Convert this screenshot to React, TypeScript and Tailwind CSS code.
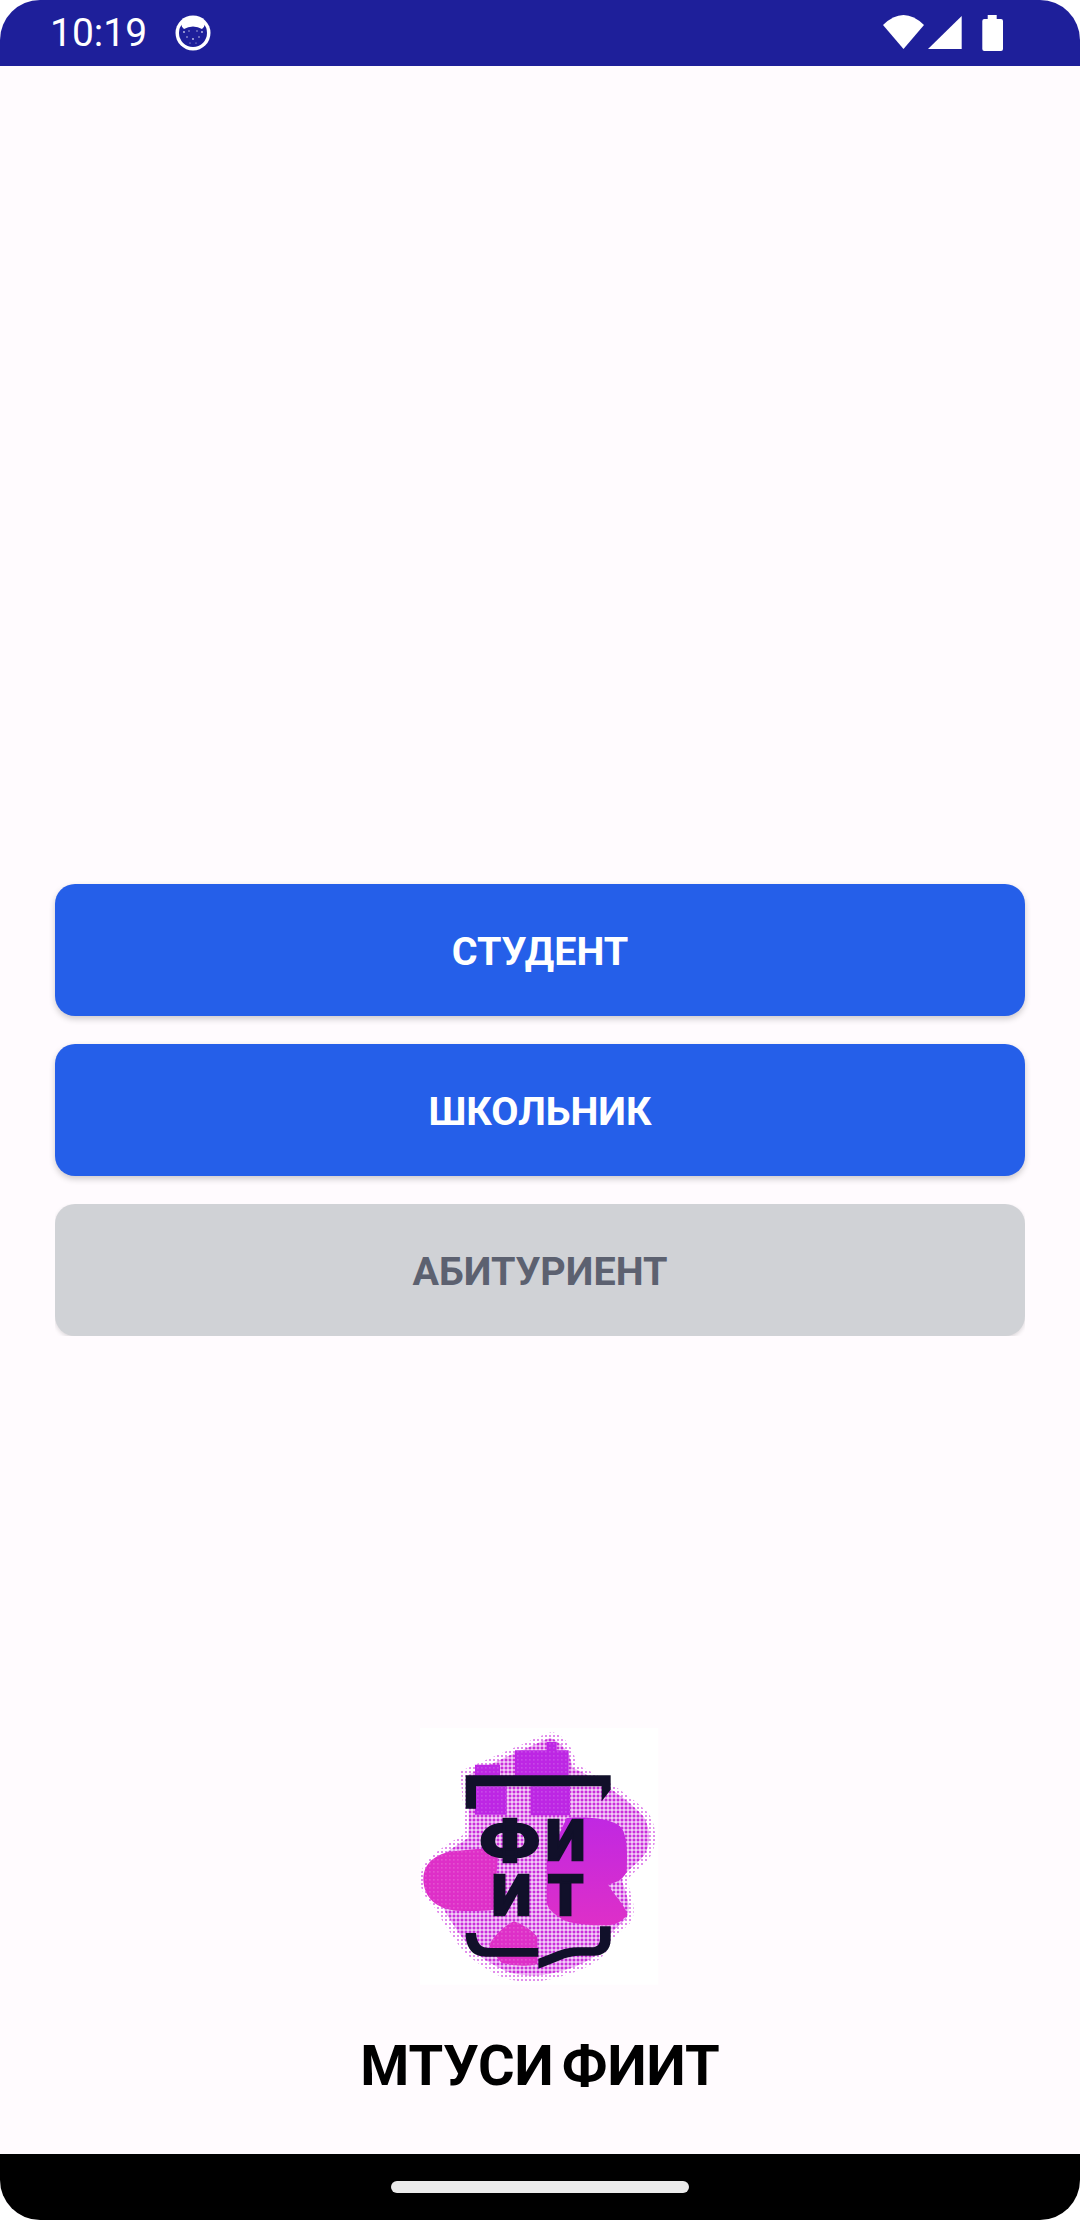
import React from "react";

function CatIcon() {
  return (
    <svg width="36" height="36" viewBox="0 0 36 36" className="block">
      <circle cx="18" cy="18" r="17.5" fill="#ffffff" />
      <circle cx="18" cy="18" r="14" fill="#1e1f9a" />
      <path d="M6 9 Q7 13 9 14 Q13 11.5 18 11.5 Q23 11.5 27 14 Q29 13 30 9 Q25 3 18 3 Q11 3 6 9Z" fill="#ffffff" />
      <g fill="#ffffff" opacity="0.75">
        <circle cx="9" cy="17" r="0.9" />
        <circle cx="14" cy="16" r="0.7" />
        <circle cx="22" cy="16" r="0.7" />
        <circle cx="27" cy="17" r="0.9" />
        <circle cx="12" cy="22" r="0.8" />
        <circle cx="18" cy="24" r="0.9" />
        <circle cx="24" cy="22" r="0.8" />
        <circle cx="15" cy="28" r="0.6" />
        <circle cx="21" cy="28" r="0.6" />
      </g>
    </svg>
  );
}

function StatusIcons() {
  return (
    <svg width="120" height="40" viewBox="0 0 120 40" className="block">
      <path d="M0 12 Q20.5 -8 41 12 L20.5 36Z" fill="#ffffff" />
      <path d="M45 36 L78.7 3 V36Z" fill="#ffffff" />
      <path d="M101.3 38 a2 2 0 0 1 -2 -2 V8 a2 2 0 0 1 2 -2 H104.7 V2 H113.7 V6 H118 a2 2 0 0 1 2 2 V36 a2 2 0 0 1 -2 2Z" fill="#ffffff" />
    </svg>
  );
}

function Logo() {
  const letter = "font-['Roboto'] font-black";
  return (
    <svg width="280" height="280" viewBox="0 0 840 840" className="block">
      <defs>
        <pattern id="fine" width="12" height="12" patternUnits="userSpaceOnUse">
          <rect x="3.5" y="3.5" width="5" height="5" fill="#d45ae4" />
        </pattern>
        <pattern id="mid" width="12" height="12" patternUnits="userSpaceOnUse">
          <rect x="1.5" y="1.5" width="9" height="9" fill="#c92edb" />
        </pattern>
        <pattern id="densePink" width="12" height="12" patternUnits="userSpaceOnUse">
          <rect width="12" height="12" fill="#de2fc8" />
          <rect x="4.5" y="4.5" width="2.5" height="2.5" fill="#f5b5ea" />
        </pattern>
        <pattern id="densePurple" width="12" height="12" patternUnits="userSpaceOnUse">
          <rect width="12" height="12" fill="#bd26e4" />
          <rect x="4.5" y="4.5" width="2.5" height="2.5" fill="#e6a8f5" />
        </pattern>
        <linearGradient id="rightBlob" x1="0" y1="0" x2="0" y2="1">
          <stop offset="0" stopColor="#c028e2" />
          <stop offset="1" stopColor="#de2fc8" />
        </linearGradient>
      </defs>
      <rect x="60" y="30" width="715" height="770" fill="#ffffff" />
      <path d="M455 42 C490 50 520 85 530 140 C590 165 690 230 745 285 C775 330 770 390 745 425 C715 455 690 470 680 490 C695 530 710 570 695 610 C670 640 640 650 625 690 C600 745 500 775 420 790 C380 795 340 790 300 775 C250 750 200 715 175 680 C150 640 125 610 105 570 C75 540 55 510 62 470 C70 420 130 385 190 350 C195 290 185 220 180 160 L340 90 C370 80 400 60 455 42Z" fill="url(#fine)" />
      <path d="M450 60 C480 70 510 100 518 150 C590 180 680 240 730 295 C755 335 752 385 730 415 C705 445 675 460 665 485 C680 530 695 565 680 600 C655 628 630 640 612 680 C590 730 500 760 420 772 C380 775 345 770 315 758 C265 735 220 705 195 670 C170 635 145 600 125 560 C95 530 72 505 78 470 C85 430 145 400 205 360 C208 300 205 230 205 170 L345 105 C375 95 410 75 450 60Z" fill="url(#mid)" />
      <path d="M70 485 C70 430 115 400 180 398 C220 392 260 392 295 395 L282 575 C245 580 205 580 170 578 C110 572 72 540 70 485Z" fill="url(#densePink)" />
      <path d="M225 140 H300 V175 H345 V97 H440 V72 H470 V97 H506 V175 H225Z" fill="url(#densePurple)" />
      <path d="M225 205 H320 V290 H225Z M392 205 H510 V292 H392Z" fill="url(#densePurple)" />
      <path d="M500 300 C560 296 630 300 660 325 C685 350 682 420 680 462 C665 490 640 495 625 500 C640 530 675 560 682 590 C665 612 640 624 610 622 C570 622 525 618 495 608 C470 595 445 575 440 555 L440 430 Z" fill="url(#rightBlob)" />
      <path d="M342 610 C370 620 400 640 412 658 V738 C390 745 350 745 305 735 C290 715 272 700 268 680 C285 650 310 625 342 610Z" fill="url(#densePink)" />

      <path d="M197 172 H632 V215 L605 250 V205 H228 V272 H197Z" fill="#11102a" />
      <path d="M197 645 H228 C230 678 245 690 268 690 H415 V716 H258 C218 716 197 690 197 645Z" fill="#11102a" />
      <path d="M600 625 H632 V665 C632 695 612 713 580 713 H540 C495 713 465 735 415 752 V722 C465 705 490 688 535 688 H575 C595 688 600 676 600 660Z" fill="#11102a" />

      <text x="329" y="425" textAnchor="middle" fontSize="168" fill="#11102a" stroke="#11102a" strokeWidth="7" className={letter} transform="translate(329 0) scale(1.28 1) translate(-329 0)">Ф</text>
      <text x="497" y="425" textAnchor="middle" fontSize="168" fill="#11102a" stroke="#11102a" strokeWidth="7" className={letter}>И</text>
      <text x="335" y="590" textAnchor="middle" fontSize="168" fill="#11102a" stroke="#11102a" strokeWidth="7" className={letter}>И</text>
      <text x="497" y="590" textAnchor="middle" fontSize="168" fill="#11102a" stroke="#11102a" strokeWidth="7" className={letter}>Т</text>
    </svg>
  );
}

function RoleButton({ label, disabled }: { label: string; disabled?: boolean }) {
  return (
    <div className={disabled ? "h-[132px] w-full overflow-hidden" : "h-[132px] w-full"}>
      <button
        className={
          disabled
            ? "flex h-[132px] w-full items-center justify-center rounded-[20px] bg-[#d0d2d6] pt-[3px] text-[39.5px] font-bold text-[#5c6170] shadow-[0_2px_4px_rgba(0,0,0,0.14)]"
            : "flex h-[132px] w-full items-center justify-center rounded-[20px] bg-[#255fe9] pt-[3px] text-[39.5px] font-bold text-white shadow-[0_3px_6px_rgba(0,0,0,0.2)]"
        }
      >
        {label}
      </button>
    </div>
  );
}

export default function App() {
  return (
    <div className="h-[2220px] w-[1080px] bg-white font-['Roboto',sans-serif]">
      <div className="flex h-full w-full flex-col overflow-hidden rounded-[40px] bg-[#fffbfe]">
        <div className="flex h-[66px] items-center justify-between bg-[#1e1f9a] pl-[50px] pr-[77px] text-white">
          <div className="flex items-center gap-[28px]">
            <span className="text-[39px] leading-none">10:19</span>
            <CatIcon />
          </div>
          <StatusIcons />
        </div>
        <main className="flex flex-1 flex-col items-center">
          <div className="mt-[818px] flex w-full flex-col gap-[28px] px-[55px]">
            <RoleButton label="СТУДЕНТ" />
            <RoleButton label="ШКОЛЬНИК" />
            <RoleButton label="АБИТУРИЕНТ" disabled />
          </div>
          <div className="mt-[382px]">
            <Logo />
          </div>
          <h1 className="mt-[40px] text-[56px] font-bold leading-none text-black [word-spacing:-6px]">МТУСИ ФИИТ</h1>
        </main>
        <div className="flex h-[66px] items-start justify-center bg-black pt-[27px]">
          <div className="h-[12px] w-[298px] rounded-full bg-[#ebebeb]" />
        </div>
      </div>
    </div>
  );
}
